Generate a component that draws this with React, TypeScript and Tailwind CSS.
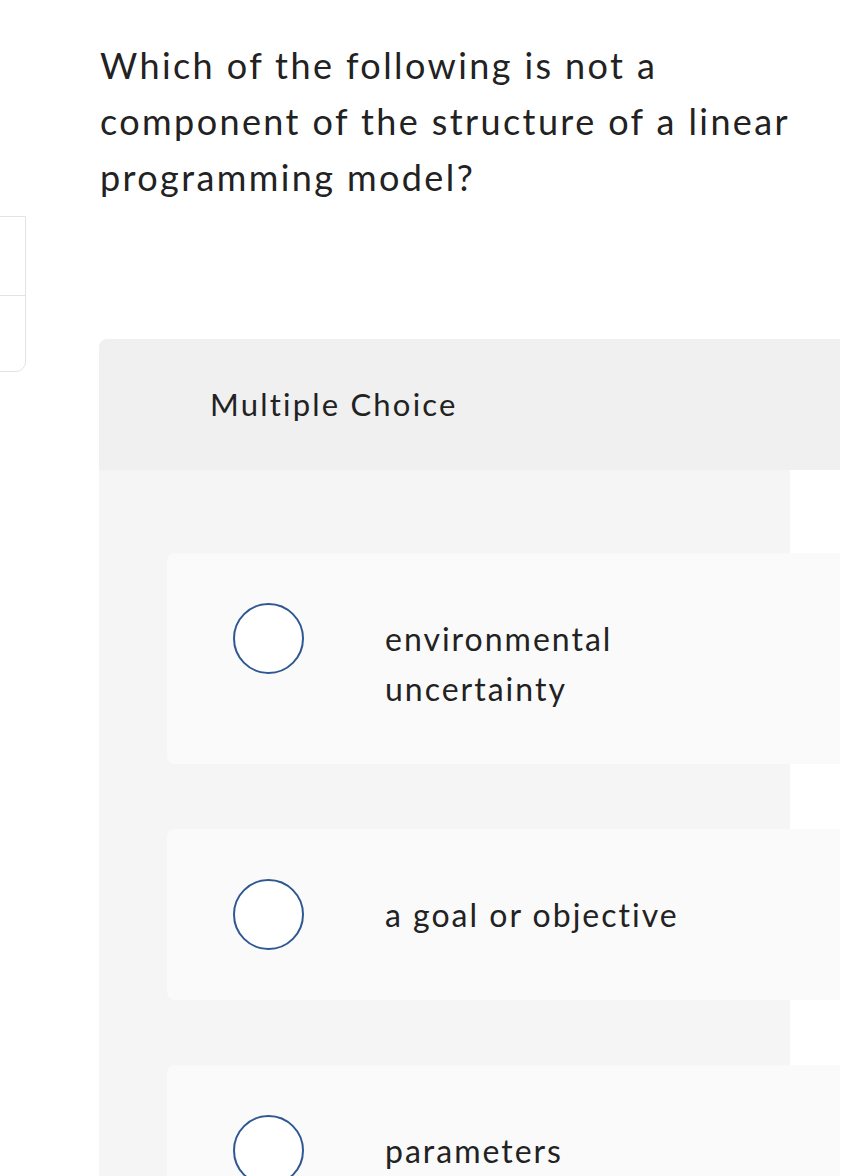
import React from "react";

// Multiple choice question card — question prompt, header band, option list.

const OPTIONS = [
  "environmental uncertainty",
  "a goal or objective",
  "parameters",
];

const Radio: React.FC = () => (
  <span className="block w-[71px] h-[71px] shrink-0 rounded-full border-2 border-[#2f5891] bg-white" />
);

export default function App() {
  return (
    <div
      className="relative min-h-[1176px] bg-white text-[#222] overflow-hidden"
      style={{ fontFamily: "Lato, 'Open Sans', sans-serif" }}
    >
      {/* partially hidden side panel */}
      <div className="absolute left-[-40px] top-[216px] w-[66px] h-[156px] border border-[#e3e3e3] rounded-br-[10px] flex flex-col">
        <div className="h-[79px] border-b border-[#e3e3e3]" />
        <div className="flex-1" />
      </div>

      <div className="pt-[37px] pl-[100px] pr-[20px]">
        <p className="text-[36px] leading-[56px] tracking-[2.4px]">
          Which of the following is not a
          <br />
          component of the structure of a linear
          <br />
          programming model?
        </p>
      </div>

      <div className="mt-[134px] ml-[99px] w-[741px]">
        <div className="h-[131px] bg-[#f0f0f0] rounded-tl-[8px] flex items-center pl-[111px]">
          <span className="text-[31px] tracking-[2.2px]">Multiple Choice</span>
        </div>
        <div className="w-[691px] bg-[#f5f5f5] pl-[68px] pt-[83px] pb-[40px] flex flex-col gap-[65px]">
          {OPTIONS.map((opt) => (
            <div
              key={opt}
              className="mr-[-50px] bg-[#fafafa] rounded-l-[8px] py-[50px] pl-[66px] flex items-start"
            >
              <Radio />
              <span className="ml-[81px] mt-[11px] text-[32px] leading-[50px] tracking-[2px] max-w-[320px]">
                {opt}
              </span>
            </div>
          ))}
        </div>
      </div>
    </div>
  );
}
